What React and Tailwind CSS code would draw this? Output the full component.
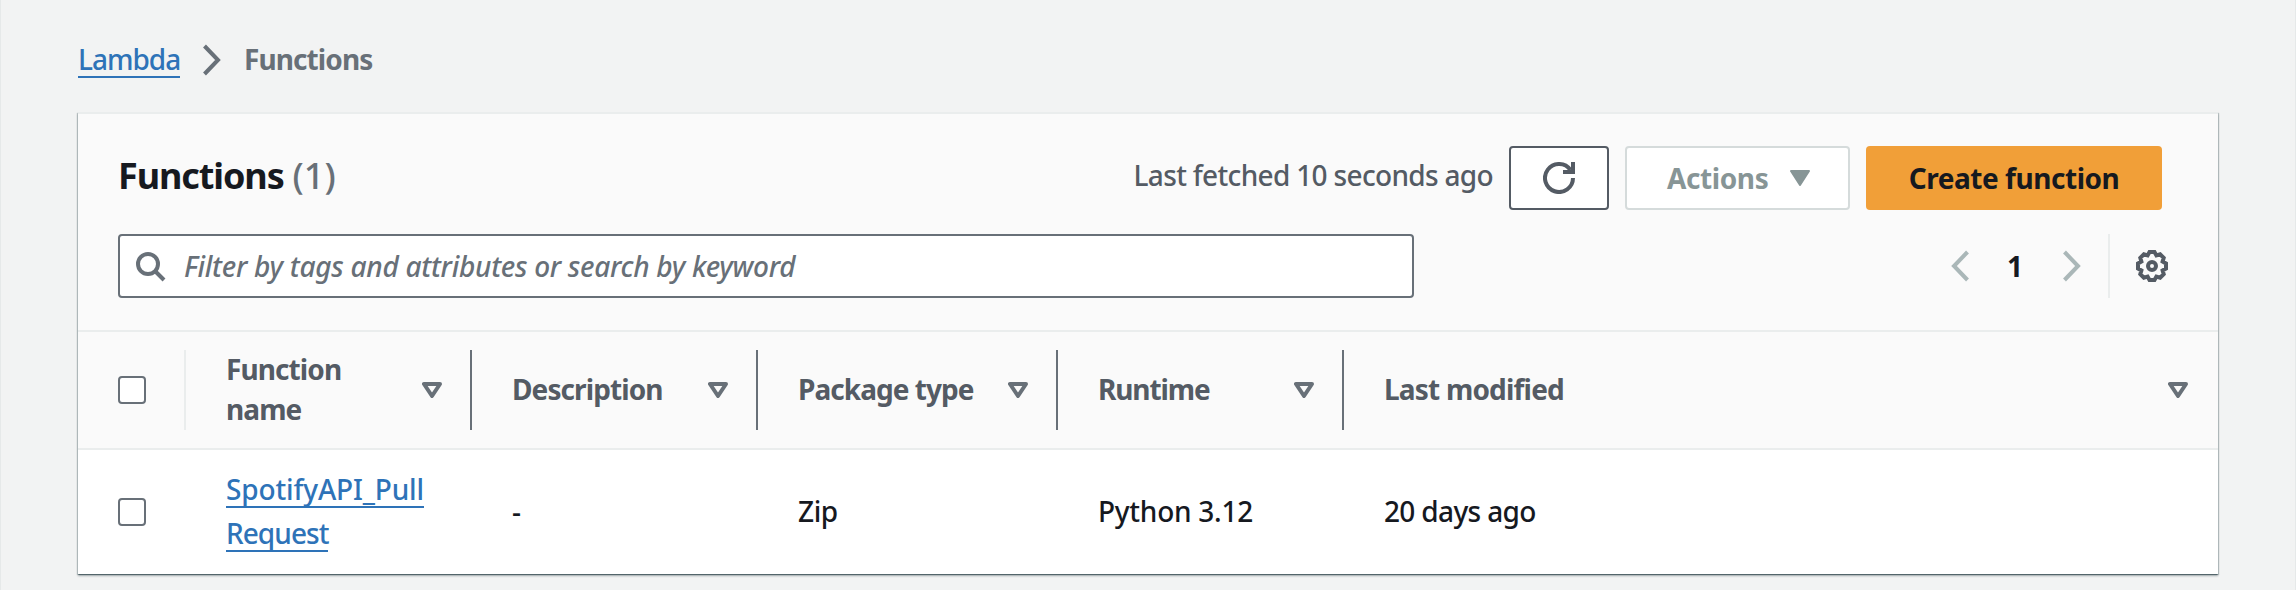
function ChevronRight({ className }) {
  return (
    <svg viewBox="0 0 18 32" className={className} fill="none" stroke="currentColor" strokeWidth="4">
      <path d="M1.5 2 L15 16 L1.5 30" />
    </svg>
  );
}

function Search() {
  return (
    <svg viewBox="0 0 32 32" className="h-8 w-8 shrink-0" fill="none" stroke="currentColor" strokeWidth="4">
      <circle cx="14" cy="14" r="10" />
      <path d="M21 21 L30 30" />
    </svg>
  );
}

function Refresh() {
  return (
    <svg viewBox="0 0 32 32" className="h-8 w-8" fill="none" stroke="currentColor" strokeWidth="4">
      <path d="M30 16 A14 14 0 1 1 27.5 8" />
      <path d="M30 0 V10 H20" />
    </svg>
  );
}

function Gear() {
  return (
    <svg viewBox="0 0 32 32" className="h-8 w-8" fill="none" stroke="currentColor" strokeWidth="4">
      <path d="M13.5 2 L18.5 2 L20.4 5.4 L24.1 4.3 L27.7 7.9 L26.6 11.6 L30 13.5 L30 18.5 L26.6 20.4 L27.7 24.1 L24.1 27.7 L20.4 26.6 L18.5 30 L13.5 30 L11.6 26.6 L7.9 27.7 L4.3 24.1 L5.4 20.4 L2 18.5 L2 13.5 L5.4 11.6 L4.3 7.9 L7.9 4.3 L11.6 5.4 Z" />
      <circle cx="16" cy="16" r="4" />
    </svg>
  );
}

function SortCaret() {
  return (
    <svg viewBox="0 0 20 16" className="h-4 w-5 shrink-0 text-[#687078]" fill="none" stroke="currentColor" strokeWidth="4" strokeLinejoin="round">
      <path d="M2 2 H18 L10 14 Z" />
    </svg>
  );
}

function Checkbox() {
  return <span className="block h-7 w-7 rounded-[4px] border-2 border-[#687078] bg-white" />;
}

function HeaderCell({ className, children }) {
  return (
    <div className={`flex h-20 items-center justify-between pl-10 text-[28px] leading-10 font-bold text-[#545b64] ${className}`}>
      {children}
      <SortCaret />
    </div>
  );
}

export default function App() {
  return (
    <div className="h-[590px] w-full border-x border-[#e6e9e9] bg-[#f2f3f3] px-[77px] font-['Noto_Sans','Open_Sans',sans-serif] text-[28px] text-[#16191f]">
      <nav className="flex h-[112px] items-center pt-2">
        <a className="h-[35px] w-[102px] border-b-2 border-[#2e73b8] leading-[32px] font-medium tracking-[-1px] text-[#2e73b8]">Lambda</a>
        <ChevronRight className="ml-[23px] h-8 w-[18px] text-[#687078]" />
        <span className="ml-[23px] pb-[2px] font-bold tracking-[-0.9px] text-[#687078]">Functions</span>
      </nav>

      <main className="h-[462px] w-[2140px] border-t-2 border-[#eaeded] bg-white shadow-[0_2px_2px_0_rgba(0,28,36,0.3),1px_1px_1px_0_rgba(0,28,36,0.2),-1px_1px_1px_0_rgba(0,28,36,0.2),0_1px_0_0_rgba(0,28,36,0.25)]">
        <header className="h-[218px] border-b-2 border-[#eaeded] bg-[#fafafa] pt-8 pl-10">
          <div className="flex h-16 items-center pr-14">
            <h1 className="flex flex-1 gap-[9px] pb-1 text-[36px] leading-[48px]">
              <span className="font-bold tracking-[-1.1px]">Functions</span>
              <span className="font-medium text-[#687078]">(1)</span>
            </h1>
            <span className="pb-[6px] font-medium tracking-[-0.67px] text-[#545b64]">Last fetched 10 seconds ago</span>
            <button className="ml-4 flex h-16 w-[100px] items-center justify-center rounded-[4px] border-2 border-[#545b64] bg-white text-[#545b64]">
              <Refresh />
            </button>
            <button className="ml-4 flex h-16 w-[225px] items-center rounded-[4px] border-2 border-[#d5dbdb] bg-white pl-10 font-bold tracking-[-0.4px] text-[#879596]">
              Actions
              <svg viewBox="0 0 20 16" className="ml-[22px] h-4 w-5 fill-current stroke-current" strokeWidth="2" strokeLinejoin="round">
                <path d="M1 1 H19 L10 15 Z" />
              </svg>
            </button>
            <button className="ml-4 h-16 w-[296px] rounded-[4px] bg-[#f19f38] font-bold tracking-[-0.45px]">Create function</button>
          </div>
          <div className="mt-6 flex h-16">
            <div className="flex w-[1296px] items-center gap-[18px] rounded-[4px] border-2 border-[#687078] bg-white pl-[14px] text-[#687078]">
              <Search />
              <span className="font-medium tracking-[-0.28px] italic">Filter by tags and attributes or search by keyword</span>
            </div>
            <div className="ml-[537px] flex items-center">
              <ChevronRight className="h-8 w-[18px] rotate-180 text-[#aab7b8]" />
              <span className="ml-[38px] w-4 font-bold">1</span>
              <ChevronRight className="ml-10 h-8 w-[18px] text-[#aab7b8]" />
              <span className="ml-[27px] h-16 w-[2px] bg-[#eaeded]" />
              <span className="ml-[26px] text-[#545b64]"><Gear /></span>
            </div>
          </div>
        </header>

        <div className="flex h-[118px] items-center border-b-2 border-[#eaeded] bg-[#fafafa]">
          <div className="flex h-20 w-[108px] items-center border-r-2 border-[#eaeded] pl-10"><Checkbox /></div>
          <HeaderCell className="w-[286px] border-r-2 border-[#687078] pr-7">
            <span className="w-[130px] pb-[2px] tracking-[-0.9px]">Function name</span>
          </HeaderCell>
          <HeaderCell className="w-[286px] border-r-2 border-[#687078] pr-7">
            <span className="pb-[2px] tracking-[-0.9px]">Description</span>
          </HeaderCell>
          <HeaderCell className="w-[300px] border-r-2 border-[#687078] pr-7">
            <span className="pb-[2px] tracking-[-0.95px]">Package type</span>
          </HeaderCell>
          <HeaderCell className="w-[286px] border-r-2 border-[#687078] pr-7">
            <span className="pb-[2px] tracking-[-1.1px]">Runtime</span>
          </HeaderCell>
          <HeaderCell className="flex-1 pr-[30px]">
            <span className="pb-[2px] tracking-[-0.8px]">Last modified</span>
          </HeaderCell>
        </div>

        <div className="flex h-[124px] items-center font-medium">
          <div className="w-[148px] pl-10"><Checkbox /></div>
          <div className="flex w-[286px] flex-col items-start gap-[9px] text-[#2e73b8]">
            <a className="h-[35px] w-[198px] border-b-2 border-[#2e73b8] leading-[32px] tracking-[-0.15px]">SpotifyAPI_Pull</a>
            <a className="h-[35px] w-[102px] border-b-2 border-[#2e73b8] leading-[32px] tracking-[-0.95px]">Request</a>
          </div>
          <div className="w-[286px] pb-[2px]">-</div>
          <div className="w-[300px] pb-[2px] tracking-[-0.4px]">Zip</div>
          <div className="w-[286px] pb-[2px] tracking-[-0.25px]">Python 3.12</div>
          <div className="pb-[2px] tracking-[-0.65px]">20 days ago</div>
        </div>
      </main>
    </div>
  );
}
